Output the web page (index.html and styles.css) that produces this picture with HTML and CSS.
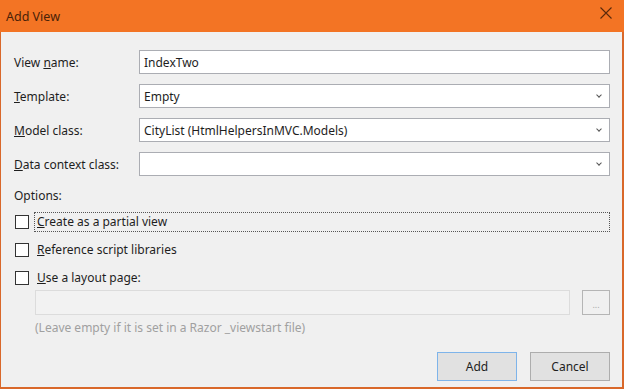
FILE: index.html
```html
<!DOCTYPE html>
<html>
<head>
    <title>Add View</title>
    <link rel="stylesheet" href="styles.css">
</head>
<body>

    <div class="dialog">
        <div class="title-bar">
            <span class="title">Add View</span>
            <svg class="close" width="12" height="12" viewBox="0 0 12 12">
                <path d="M0.5 0.5 L11.5 11.5 M11.5 0.5 L0.5 11.5" stroke="#5a2a0c" stroke-width="1.1" fill="none"/>
            </svg>
        </div>

        <div class="dialog-body">
            <div class="field-row">
                <label class="field-label">View <u>n</u>ame:</label>
                <div class="field-box">IndexTwo</div>
            </div>
            <div class="field-row">
                <label class="field-label"><u>T</u>emplate:</label>
                <div class="field-box select">Empty<span class="chevron"></span></div>
            </div>
            <div class="field-row">
                <label class="field-label"><u>M</u>odel class:</label>
                <div class="field-box select">CityList (HtmlHelpersInMVC.Models)<span class="chevron"></span></div>
            </div>
            <div class="field-row">
                <label class="field-label"><u>D</u>ata context class:</label>
                <div class="field-box select"><span class="chevron"></span></div>
            </div>

            <div class="options-label">Options:</div>

            <div class="check-row">
                <span class="checkbox"></span>
                <span class="check-text focused"><u>C</u>reate as a partial view</span>
            </div>
            <div class="check-row">
                <span class="checkbox"></span>
                <span class="check-text"><u>R</u>eference script libraries</span>
            </div>
            <div class="check-row">
                <span class="checkbox"></span>
                <span class="check-text"><u>U</u>se a layout page:</span>
            </div>

            <div class="layout-row">
                <div class="layout-box"></div>
                <div class="browse-button">...</div>
            </div>
            <div class="hint">(Leave empty if it is set in a Razor _viewstart file)</div>

            <div class="button-row">
                <div class="dialog-button default">Add</div>
                <div class="dialog-button">Cancel</div>
            </div>
        </div>
    </div>

</body>
</html>
```

FILE: styles.css
```css
body {
    margin: 0;
    font-family: "Noto Sans", "Open Sans", sans-serif;
    font-size: 12px;
    color: #1e1e1e;
}

.dialog {
    width: 624px;
    height: 389px;
    box-sizing: border-box;
    background-color: #F0F0F0;
    border: 1px solid #D9682A;
    border-top: none;
    border-right-width: 2px;
    border-bottom-width: 2px;
}

.title-bar {
    height: 32px;
    background-color: #F37424;
    display: flex;
    align-items: center;
    justify-content: space-between;
    padding: 0 12px 0 6px;
    margin: 0 -2px 0 -1px;
}

.title {
    color: #4a2208;
    font-size: 12.5px;
    margin-top: 1px;
}

.close {
    margin-top: -7px;
}

.dialog-body {
    padding: 18px 12px 0 13px;
}

.field-row {
    display: flex;
    align-items: center;
    margin-bottom: 10px;
}

.field-label {
    width: 125px;
}

.field-box {
    flex: 1;
    height: 24px;
    box-sizing: border-box;
    border: 1px solid #ABADB3;
    background-color: #fff;
    padding: 0 4px;
    display: flex;
    align-items: center;
    position: relative;
}

.chevron {
    position: absolute;
    right: 8px;
    top: 8px;
    width: 3px;
    height: 3px;
    border-right: 1px solid #555;
    border-bottom: 1px solid #555;
    transform: rotate(45deg);
}

.options-label {
    margin-top: 11px;
    margin-bottom: 9px;
}

.check-row {
    display: flex;
    align-items: center;
    margin-bottom: 10px;
    height: 18px;
}

.checkbox {
    width: 12px;
    height: 12px;
    border: 1px solid #333;
    background-color: #fff;
    margin-left: 1px;
    margin-right: 5px;
}

.check-text {
    padding: 0 2px 1px 2px;
    border: 1px solid transparent;
}

.check-text.focused {
    flex: 1;
    border: 1px dotted #555;
}

.layout-row {
    display: flex;
    margin-left: 21px;
    margin-top: -7px;
}

.layout-box {
    flex: 1;
    height: 23px;
    border: 1px solid #dcdcdc;
    background-color: #F2F2F2;
}

.browse-button {
    width: 26px;
    height: 23px;
    margin-left: 12px;
    border: 1px solid #B5B5B5;
    background-color: #F0F0F0;
    color: #aaa;
    font-size: 9px;
    text-align: center;
    line-height: 27px;
}

.hint {
    margin-left: 21px;
    margin-top: 4px;
    color: #A0A0A0;
}

.button-row {
    display: flex;
    justify-content: flex-end;
    gap: 13px;
    margin-top: 16px;
}

.dialog-button {
    width: 78px;
    height: 27px;
    border: 1px solid #ADADAD;
    background-color: #E1E1E1;
    display: flex;
    align-items: center;
    justify-content: center;
}

.dialog-button.default {
    border-color: #7EB4EA;
}
```
